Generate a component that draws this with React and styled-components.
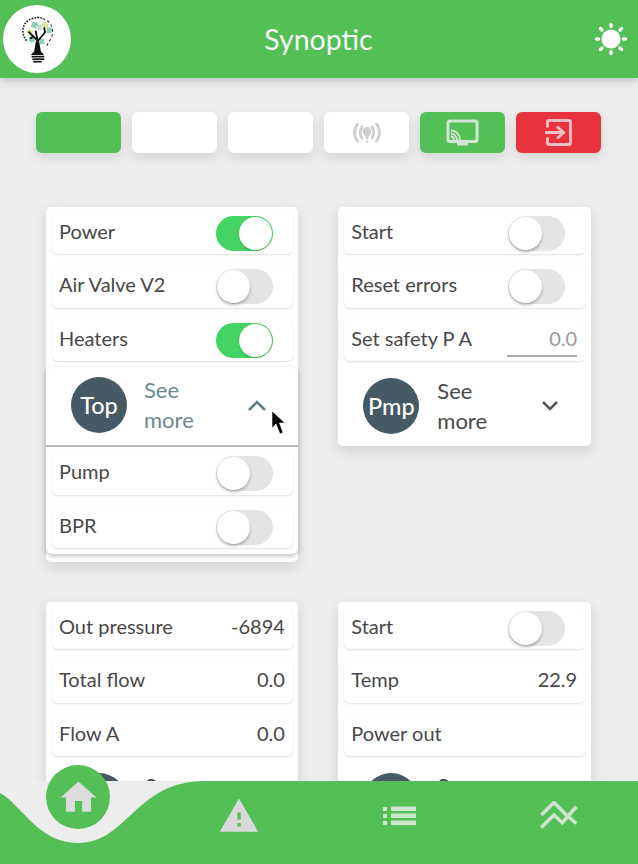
import React from "react";
import styled, { createGlobalStyle } from "styled-components";

const Global = createGlobalStyle`
  html, body { margin: 0; padding: 0; background: #ededed; }
  body { font-family: Lato, "Noto Sans", "Liberation Sans", sans-serif; color: #3a3a3a; }
`;

const Page = styled.div`
  position: relative;
  width: 638px;
  height: 864px;
  overflow: hidden;
  background: #ededed;
`;

const Header = styled.header`
  height: 78px;
  background: #53bf56;
  box-shadow: 0 2px 8px rgba(0, 0, 0, 0.22);
  display: flex;
  align-items: center;
  justify-content: space-between;
  padding: 0 10px 0 3px;
`;

const LogoDisc = styled.div`
  width: 68px;
  height: 68px;
  border-radius: 50%;
  background: #fff;
  display: flex;
  align-items: center;
  justify-content: center;
`;

const Title = styled.h1`
  margin: 0 0 0 -28px;
  font-size: 28.5px;
  font-weight: 400;
  color: #f4fbf4;
`;

const Toolbar = styled.div`
  display: grid;
  grid-template-columns: repeat(6, 85px);
  column-gap: 11px;
  padding: 34px 0 0 36px;
`;

const ToolButton = styled.div`
  height: 41px;
  border-radius: 6px;
  background: ${(p) => p.$bg || "#fff"};
  box-shadow: 0 5px 12px rgba(0, 0, 0, 0.1);
  display: flex;
  align-items: center;
  justify-content: center;
`;

const CardGrid = styled.div`
  display: grid;
  grid-template-columns: 252.4px 252.4px;
  column-gap: 39.9px;
  row-gap: 40px;
  align-items: start;
  padding: 54px 0 0 46px;
`;

const Card = styled.section`
  background: #fff;
  border-radius: 5px;
  box-shadow: 0 5px 14px rgba(0, 0, 0, 0.12);
  padding: 5px 5.5px ${(p) => (p.$expanded ? "8.5px" : "0")};
`;

const Row = styled.div`
  height: 42px;
  box-sizing: border-box;
  margin-bottom: ${(p) => (p.$last ? "0" : "11.5px")};
  padding: 0 8px 0 7.5px;
  border-radius: 6px;
  background: #fff;
  box-shadow: 0 1px 2px rgba(0, 0, 0, 0.13);
  display: flex;
  align-items: center;
  justify-content: space-between;
`;

const Label = styled.span`
  margin-bottom: 5px;
  font-size: 20px;
  color: #484848;
`;

const Value = styled.span`
  margin-bottom: 5px;
  font-size: 20px;
  color: #484848;
`;

const Track = styled.div`
  position: relative;
  width: 57px;
  height: 35px;
  margin-right: 12px;
  border-radius: 18px;
  background: ${(p) => (p.$on ? "#43d463" : "#e4e4e4")};
`;

const Knob = styled.div`
  position: absolute;
  top: 1px;
  left: ${(p) => (p.$on ? "23px" : "1px")};
  width: 33px;
  height: 33px;
  border-radius: 50%;
  background: #fff;
  box-shadow: ${(p) => (p.$on ? "0 1px 2px rgba(0,0,0,.2)" : "0 2px 3px rgba(0,0,0,.28)")};
`;

const NumberInput = styled.div`
  width: 70px;
  height: 30px;
  margin-top: 3px;
  box-sizing: border-box;
  border-bottom: 2px solid #adadad;
  font-size: 20px;
  line-height: 23px;
  color: #9a9a9a;
  text-align: right;
`;

const Accordion = styled.div`
  margin: 6px -5.5px 0;
  border-radius: 6px;
  background: #fff;
  box-shadow: ${(p) => (p.$open ? "0 2px 5px rgba(0,0,0,.25)" : "none")};
`;

const AccordionHead = styled.div`
  height: ${(p) => (p.$open ? "80px" : "79px")};
  box-sizing: border-box;
  display: flex;
  align-items: center;
  padding: 0 31px 2px 25px;
  border-bottom: ${(p) => (p.$open ? "2px solid #b8b8b8" : "0")};
`;

const Avatar = styled.div`
  flex: none;
  width: 56px;
  height: 56px;
  border-radius: 50%;
  background: #455a64;
  color: #fff;
  font-size: 23.5px;
  font-weight: 500;
  display: flex;
  align-items: center;
  justify-content: center;
`;

const SeeMore = styled.div`
  width: 60px;
  margin-left: ${(p) => (p.$open ? "17px" : "18px")};
  font-size: 22px;
  line-height: 30px;
  color: ${(p) => (p.$open ? "#6e8792" : "#4a4a4a")};
`;

const Chevron = styled.svg`
  margin-left: auto;
  display: block;
`;

const AccordionBody = styled.div`
  padding: 5.5px 5.5px 5.5px;
`;

const BottomBar = styled.nav`
  position: absolute;
  left: 0;
  right: 0;
  bottom: 0;
  height: 83px;
  background: #ededed;
`;

const Wave = styled.svg`
  display: block;
`;

const HomeBubble = styled.div`
  position: absolute;
  left: 46px;
  top: -16px;
  width: 64px;
  height: 64px;
  border-radius: 50%;
  background: #53bf56;
  display: flex;
  align-items: center;
  justify-content: center;
`;

const NavIcon = styled.svg`
  position: absolute;
  left: ${(p) => p.$x}px;
  top: ${(p) => p.$y}px;
`;

const Pointer = styled.svg`
  position: absolute;
  left: 271px;
  top: 410px;
`;

const Logo = () => (
  <svg width="37" height="48" viewBox="0 0 44 56">
    <g fill="none" stroke="#222" strokeWidth="2" strokeDasharray="2 1.5">
      <path d="M9 30 C2 22 3 8 15 4 C20 2 24 2 27 3" />
    </g>
    <path d="M28 4 C38 6 42 16 39 25 C37 30 34 33 33 37" fill="none" stroke="#222" strokeWidth="1.2" strokeDasharray="3 3" />
    <g fill="#8fcdb6">
      <rect x="15" y="7" width="7" height="7" transform="rotate(20 16 11)" />
      <rect x="33" y="14" width="6" height="7" />
      <rect x="12" y="25" width="6" height="7" transform="rotate(-20 15 28)" />
      <rect x="25" y="28" width="5" height="6" />
    </g>
    <g fill="#dfe29a">
      <rect x="9" y="16" width="6" height="6" transform="rotate(35 11 20)" />
      <rect x="27" y="8" width="7" height="6" transform="rotate(30 30 12)" />
      <rect x="22" y="11" width="5" height="6" fill="#b7d9c4" />
    </g>
    <g fill="none" stroke="#111" strokeWidth="2.2" strokeLinecap="round">
      <path d="M22 40 L22 30 L12 20" />
      <path d="M22 31 L31 20 L30 15" />
      <path d="M22 30 L20 19" />
      <path d="M17 25 L14 27" />
    </g>
    <path d="M18 43 L20 31 L24 31 L26 43 L30 47 L14 47 Z" fill="#111" />
    <g stroke="#111" strokeWidth="2">
      <path d="M15 49 H30" />
      <path d="M16 52 H30" />
      <path d="M17 55 H27" />
    </g>
  </svg>
);

const Sun = () => (
  <svg width="34" height="34" viewBox="0 0 34 34">
    <circle cx="17" cy="17" r="9.5" fill="#fff" />
    <g stroke="#fff" strokeWidth="3.4" strokeLinecap="round">
      <path d="M17 2.5 V4.5" />
      <path d="M17 29.5 V31.5" />
      <path d="M2.5 17 H4.5" />
      <path d="M29.5 17 H31.5" />
      <path d="M6.5 6.5 L8 8" />
      <path d="M26 26 L27.5 27.5" />
      <path d="M6.5 27.5 L8 26" />
      <path d="M26 8 L27.5 6.5" />
    </g>
  </svg>
);

const Broadcast = () => (
  <svg width="30" height="22" viewBox="0 0 30 22" fill="none" stroke="#cfcfcf" strokeWidth="2.8" strokeLinecap="round">
    <path d="M5.5 2 C1.5 7 1.5 14 5.5 19" />
    <path d="M10 5 C7.8 8.5 7.8 12.5 10 16" />
    <path d="M24.5 2 C28.5 7 28.5 14 24.5 19" />
    <path d="M20 5 C22.2 8.5 22.2 12.5 20 16" />
    <path d="M15 5 C12 5 10.8 7.5 10.8 9.5 C10.8 12.5 13.6 13.5 14 17 H16 C16.4 13.5 19.2 12.5 19.2 9.5 C19.2 7.5 18 5 15 5 Z" fill="#cfcfcf" stroke="none" />
    <circle cx="15" cy="19.5" r="1.2" fill="#cfcfcf" stroke="none" />
  </svg>
);

const Cast = () => (
  <svg width="33" height="27" viewBox="0 0 33 27" fill="none" stroke="#d3e6d3" strokeWidth="3">
    <rect x="2" y="2" width="29" height="20.5" rx="2" />
    <path d="M5 11.5 C10 11.5 14 15.5 14 21" strokeWidth="1.8" />
    <path d="M5 14.5 C8 14.5 11 17.5 11 21" strokeWidth="1.8" />
    <path d="M5 17.5 C6.8 17.5 8 19 8 21" strokeWidth="1.8" />
    <rect x="11" y="23" width="11" height="3.5" fill="#d3e6d3" stroke="none" />
  </svg>
);

const Exit = () => (
  <svg width="27" height="27" viewBox="0 0 27 27" fill="none" stroke="#f2bfc3" strokeWidth="2.8">
    <path d="M2.5 8.5 V3 C2.5 2.2 3 1.5 4 1.5 H24 C25 1.5 25.5 2.2 25.5 3 V24 C25.5 25 25 25.5 24 25.5 H4 C3 25.5 2.5 25 2.5 24 V18.5" />
    <path d="M0 13.5 H18" strokeWidth="3" />
    <path d="M12 7.5 L18.5 13.5 L12 19.5" strokeWidth="3" />
  </svg>
);

const Toggle = ({ on }) => (
  <Track $on={on}>
    <Knob $on={on} />
  </Track>
);

const Expander = ({ name, open }) => (
  <AccordionHead $open={open}>
    <Avatar>{name}</Avatar>
    <SeeMore $open={open}>See more</SeeMore>
    <Chevron width="20" height="12" viewBox="0 0 20 12" fill="none" stroke={open ? "#5f7d8b" : "#555"} strokeWidth="2.6">
      <path d={open ? "M2 11 L10 3 L18 11" : "M3 2 L10 9 L17 2"} />
    </Chevron>
  </AccordionHead>
);

export default function App() {
  return (
    <Page>
      <Global />
      <Header>
        <LogoDisc>
          <Logo />
        </LogoDisc>
        <Title>Synoptic</Title>
        <Sun />
      </Header>

      <Toolbar>
        <ToolButton $bg="#53bf56" />
        <ToolButton />
        <ToolButton />
        <ToolButton>
          <Broadcast />
        </ToolButton>
        <ToolButton $bg="#53bf56">
          <Cast />
        </ToolButton>
        <ToolButton $bg="#e8323c">
          <Exit />
        </ToolButton>
      </Toolbar>

      <CardGrid>
        <Card $expanded>
          <Row>
            <Label>Power</Label>
            <Toggle on />
          </Row>
          <Row>
            <Label>Air Valve V2</Label>
            <Toggle />
          </Row>
          <Row $last>
            <Label>Heaters</Label>
            <Toggle on />
          </Row>
          <Accordion $open>
            <Expander name="Top" open />
            <AccordionBody>
              <Row>
                <Label>Pump</Label>
                <Toggle />
              </Row>
              <Row $last>
                <Label>BPR</Label>
                <Toggle />
              </Row>
            </AccordionBody>
          </Accordion>
        </Card>

        <Card>
          <Row>
            <Label>Start</Label>
            <Toggle />
          </Row>
          <Row>
            <Label>Reset errors</Label>
            <Toggle />
          </Row>
          <Row $last>
            <Label>Set safety P A</Label>
            <NumberInput>0.0</NumberInput>
          </Row>
          <Accordion>
            <Expander name="Pmp" />
          </Accordion>
        </Card>

        <Card>
          <Row>
            <Label>Out pressure</Label>
            <Value>-6894</Value>
          </Row>
          <Row>
            <Label>Total flow</Label>
            <Value>0.0</Value>
          </Row>
          <Row $last>
            <Label>Flow A</Label>
            <Value>0.0</Value>
          </Row>
          <Accordion>
            <Expander name="Top" />
          </Accordion>
        </Card>

        <Card>
          <Row>
            <Label>Start</Label>
            <Toggle />
          </Row>
          <Row>
            <Label>Temp</Label>
            <Value>22.9</Value>
          </Row>
          <Row $last>
            <Label>Power out</Label>
          </Row>
          <Accordion>
            <Expander name="Pmp" />
          </Accordion>
        </Card>
      </CardGrid>

      <Pointer width="16" height="26" viewBox="0 0 16 26">
        <path d="M1 1 L1 18 L5 14 L9 24 L12 22.5 L8.5 13 L14 13 Z" fill="#000" stroke="#fff" strokeWidth="0.6" />
      </Pointer>

      <BottomBar>
        <Wave width="638" height="83" viewBox="0 0 638 83">
          <path d="M0 12 C22 24 38 62 78 62 C128 62 135 0 205 0 L638 0 L638 83 L0 83 Z" fill="#53bf56" />
        </Wave>
        <HomeBubble>
          <svg width="43" height="43" viewBox="0 0 24 24" fill="#dcdcdc">
            <path d="M10 20v-6h4v6h5v-8h3L12 3 2 12h3v8z" />
          </svg>
        </HomeBubble>
        <NavIcon $x={218} $y={14} width="42" height="42" viewBox="0 0 24 24" fill="#d9d9d9">
          <path d="M1 21h22L12 2 1 21zm12-3h-2v-2h2v2zm0-4h-2v-4h2v4z" />
        </NavIcon>
        <NavIcon $x={383} $y={25} width="33" height="20" viewBox="0 0 33 20" fill="#cfe6cf">
          <rect x="0" y="1" width="4" height="4" />
          <rect x="0" y="8" width="4" height="4" />
          <rect x="0" y="15" width="4" height="4" />
          <rect x="8" y="0.5" width="25" height="4.5" />
          <rect x="8" y="7.5" width="25" height="4.5" />
          <rect x="8" y="14.5" width="25" height="4.5" />
        </NavIcon>
        <NavIcon $x={540} $y={20} width="38" height="29" viewBox="0 0 38 29" fill="none" stroke="#cfe3cf" strokeWidth="3.6">
          <path d="M1.3 14 L14 1.5 L26.3 14" />
          <path d="M1.3 26.5 L14 14 L22.3 21.7 L36.3 5.7" />
          <path d="M24 12 L36.3 22.5" />
        </NavIcon>
      </BottomBar>
    </Page>
  );
}
